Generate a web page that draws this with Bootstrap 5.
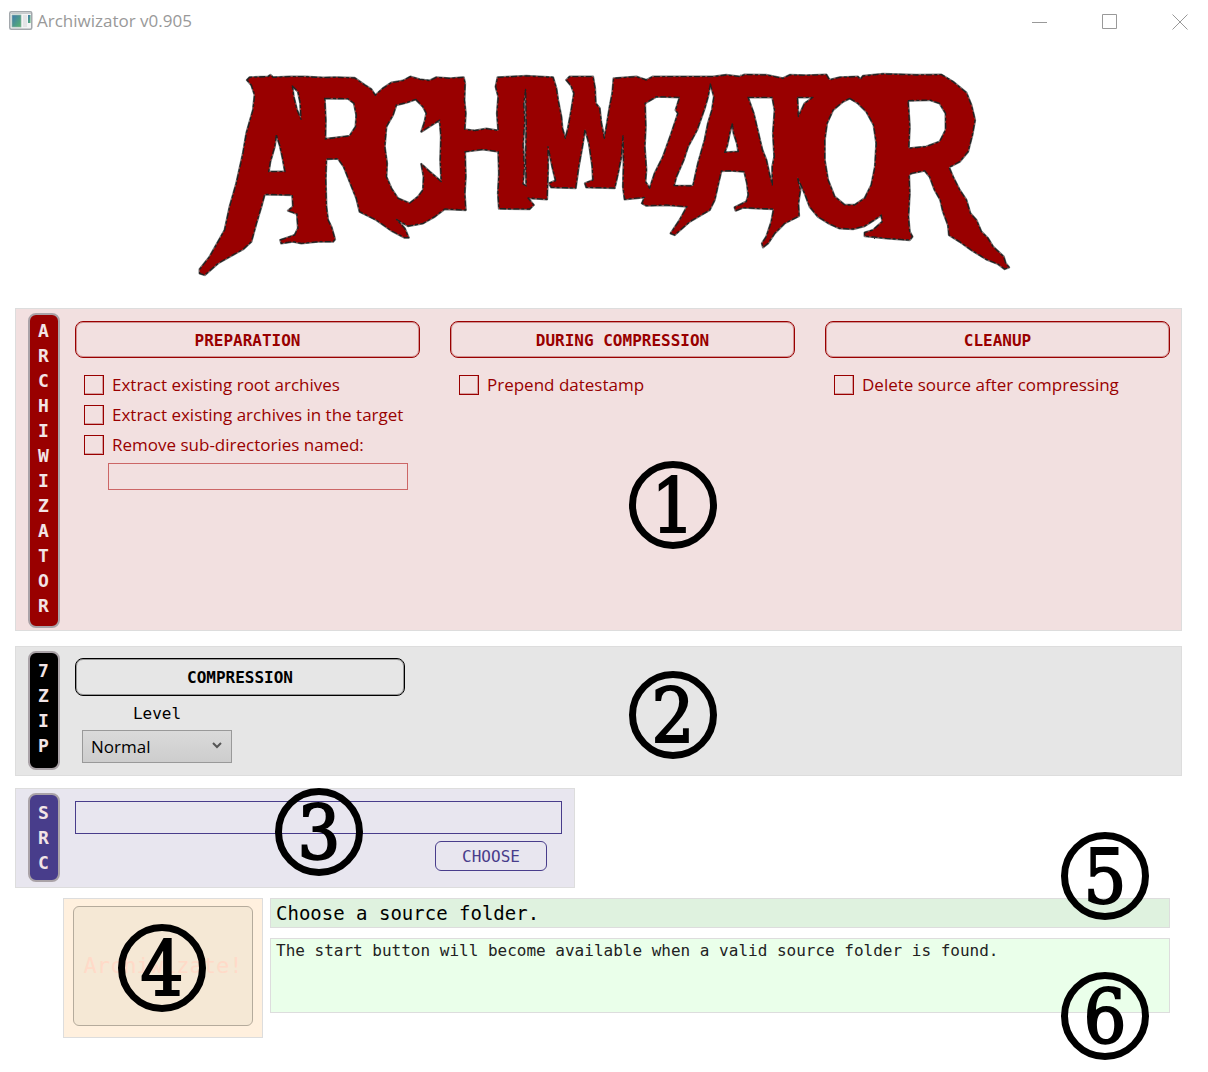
<!DOCTYPE html>
<html lang="en">
<head>
<meta charset="utf-8">
<meta name="viewport" content="width=device-width, initial-scale=1">
<title>Archiwizator v0.905</title>
<link href="https://cdn.jsdelivr.net/npm/bootstrap@5.3.0/dist/css/bootstrap.min.css" rel="stylesheet">
<style>
  :root { --ui: "Open Sans", "Noto Sans", sans-serif; --mono: "DejaVu Sans Mono", monospace; }
  body { font-family: var(--ui); font-size: 17px; line-height: 24px; color: #000; background: #fff; }
  .title-bar { height: 42px; padding-left: 9px; color: #999; }
  .title-bar button { width: 70px; height: 40px; border: 0; background: none; padding: 0 0 0 14px; }
  .logo-wrap { padding: 18px 0 23px; }
  .logo-wrap svg { width: 830px; max-width: 100%; height: auto; display: block; }
  main { padding: 0 26px 32px 15px; }
  .panel { --tone: #900; position: relative; border: 1px solid #ddd; color: var(--tone); }
  .section { display: flex; gap: 15px; padding: 4px 11px 2px 12px; }
  .panel-wiz { background: #f2e0e0; min-height: 323px; margin-bottom: 15px; }
  .panel-zip { --tone: #000; background: #e6e6e6; min-height: 130px; margin-bottom: 12px; }
  .panel-src { --tone: #483d8b; background: #e8e6ef; width: 560px; max-width: 100%; min-height: 100px; margin-bottom: 10px; padding-right: 12px; }
  .tab-label { width: 32px; flex: none; align-self: stretch; margin: 0; padding: 3px 8px 0; border: 2px solid #aaa3a8; border-radius: 8px;
    background: var(--tone); color: #f2e4e6; font: bold 18px/25px var(--mono); word-break: break-all; text-align: center; }
  .panel-zip .tab-label, .panel-src .tab-label { padding-top: 5px; margin-bottom: 3px; }
  .tab-label span { display: block; width: 11px; }
  .group-title { height: 37px; margin: 8px 0 12px; border: 1px solid var(--tone); outline: 1px solid rgba(153, 0, 0, .35); outline-offset: -2px; border-radius: 8px; font: bold 16px/37px var(--mono); text-align: center; }
  .panel-zip .group-title { height: 38px; margin: 7px 0 6px; width: 330px; max-width: 100%; outline-color: rgba(0, 0, 0, .35); line-height: 38px; }
  .opt { display: flex; align-items: center; gap: 8px; height: 30px; padding-left: 9px; }
  .opt input { appearance: none; width: 20px; height: 20px; margin: 0; border: 1px solid var(--tone); box-shadow: inset -1px -1px rgba(153, 0, 0, .3); background: none; }
  .opt input:checked { background: var(--tone); }
  .text-line { display: block; border: 1px solid var(--tone); background: transparent; border-radius: 0; color: var(--tone); padding: 0 6px; }
  .names-line { width: 300px; max-width: 90%; height: 27px; margin: 3px 0 0 33px; border-color: #c66; }
  .src-line { width: 100%; height: 33px; margin-top: 8px; }
  .columns { column-gap: 30px; }
  .level { width: 150px; margin-left: 7px; }
  .level label { font: 16px/24px var(--mono); display: block; text-align: center; margin-bottom: 4px; }
  .level select { height: 33px; border: 1px solid #999; border-radius: 0; padding: 0 24px 0 8px; font-size: 17px; line-height: 24px; color: #000;
    background: url("data:image/svg+xml,%3Csvg xmlns='http://www.w3.org/2000/svg' viewBox='0 0 10 8'%3E%3Cpath d='M1 2l4 4 4-4' fill='none' stroke='%23555' stroke-width='2'/%3E%3C/svg%3E") right 9px top 10px / 10px 8px no-repeat, linear-gradient(#dadada, #cdcdcd); }
  .choose { width: 112px; height: 30px; margin: 7px 15px 0 0; padding: 0; border: 1px solid var(--tone); border-radius: 6px; background: none; color: var(--tone); font: 16px/29px var(--mono); }
  .bottom { padding-left: 48px; padding-right: 12px; gap: 7px; }
  .start-box { width: 200px; height: 140px; padding: 7px 9px 11px; background: #fff0de; }
  .start { width: 100%; height: 100%; border: 1px solid #b5ab9c; border-radius: 6px; background: #f5e8d5; color: #ffdac8; font: 22px/26px var(--mono); padding: 0; }
  .status { height: 30px; margin-bottom: 10px; padding-left: 5px; background: #dff2df; color: #000; font: 19px/28px var(--mono); }
  .details { height: 75px; padding-left: 5px; background: #eaffea; color: #222; font: 16px/24px var(--mono); }
  .callout { position: absolute; width: 88px; height: 88px; border: 7px solid #000; border-radius: 50%; color: #000;
    font: 75px/76px "DejaVu Serif Condensed", "DejaVu Serif", serif; -webkit-text-stroke: 2px #000; text-align: center; z-index: 2; pointer-events: none; }
  .c1 { left: 613px; top: 152px; }
  .c2 { left: 613px; top: 24px; }
  .c3 { left: 259px; top: -1px; }
  .c4 { left: 54px; top: 25px; }
  .c5 { right: 20px; top: -67px; }
  .c6 { right: 20px; top: 33px; }
</style>
<script src="https://cdn.jsdelivr.net/npm/bootstrap@5.3.0/dist/js/bootstrap.bundle.min.js"></script>
</head>
<body>
<header class="title-bar d-flex align-items-center">
  <svg width="24" height="20" viewBox="0 0 24 20" aria-hidden="true">
    <defs><linearGradient id="scr" x1="0" y1="0" x2="1" y2="1"><stop offset="0" stop-color="#3f78b0"/><stop offset="1" stop-color="#58b56c"/></linearGradient></defs>
    <rect x=".75" y=".75" width="22" height="17.5" rx="1.5" fill="#f3f4f5" stroke="#a3a8ac" stroke-width="1.5"/>
    <path d="M2 2.5h20" stroke="#c8cbce"/>
    <rect x="3" y="4" width="9" height="12" fill="url(#scr)" stroke="#8fb3a5" stroke-width=".7"/>
    <rect x="14" y="4" width="4" height="12" fill="#e3e4e6"/><rect x="19" y="4" width="2.5" height="8" fill="url(#scr)"/>
  </svg>
  <span class="ms-1">Archiwizator v0.905</span>
  <div class="ms-auto d-flex">
    <button type="button" aria-label="Minimize"><svg width="16" height="16" viewBox="0 0 16 16"><path d="M0 8.5h15" stroke="#999"/></svg></button>
    <button type="button" aria-label="Maximize"><svg width="16" height="16" viewBox="0 0 16 16"><path d="M.5.5h14v14H.5z" fill="none" stroke="#999"/></svg></button>
    <button type="button" aria-label="Close"><svg width="16" height="16" viewBox="0 0 16 16"><path d="M.5.5l15 15M15.500.5l-15 15" stroke="#999"/></svg></button>
  </div>
</header>

<div class="logo-wrap d-flex justify-content-center">
  <svg viewBox="-2 0 2490 675" role="img" aria-label="Archiwizator">
    <defs>
      <filter id="rough" x="-2%" y="-2%" width="104%" height="104%"><feTurbulence type="fractalNoise" baseFrequency=".12" numOctaves="2" seed="4"/><feDisplacementMap in="SourceGraphic" scale="4" xChannelSelector="R" yChannelSelector="G"/></filter>
      <path id="mark-shape" fill-rule="evenodd" d="M172 60L180 52 235 50 242 45 250 52 300 50 345 50 400 53 440 52 495 54 525 75 545 88 557 106 580 85 605 68 640 62 662 50 690 58 720 62 740 52 780 55 822 52 826 70 824 120 828 160 825 208 855 212 890 206 926 212 922 160 926 110 918 80 924 52 1010 48 1090 52 1100 85 1105 120 1115 170 1118 205 1127 235 1135 205 1145 150 1153 100 1145 78 1130 60 1140 50 1210 50 1216 85 1218 130 1230 145 1235 190 1244 235 1252 190 1260 140 1268 100 1272 55 1340 50 1370 60 1390 50 1510 50 1570 50 1610 45 1650 50 1665 44 1730 45 1780 55 1800 45 1850 46 1910 44 1920 60 1950 52 2005 50 2012 58 2020 48 2080 42 2180 45 2255 44 2290 65 2330 98 2345 135 2356 180 2348 225 2335 275 2310 305 2278 322 2290 350 2310 390 2330 420 2342 460 2360 480 2375 515 2395 535 2410 560 2442 590 2448 610 2458 622 2445 627 2425 612 2390 598 2345 570 2310 545 2278 525 2275 495 2260 455 2252 420 2235 390 2220 350 2205 332 2165 340 2158 345 2160 400 2156 470 2160 515 2168 530 2160 540 2090 535 2025 528 2025 518 2050 510 2078 485 2075 465 2050 482 2025 498 1990 507 1950 505 1920 492 1885 470 1860 440 1845 400 1823 352 1832 390 1826 430 1828 468 1785 490 1755 520 1735 550 1720 562 1717 550 1730 530 1745 485 1752 447 1700 445 1660 443 1638 452 1635 442 1670 425 1676 405 1672 370 1664 335 1620 332 1595 333 1585 375 1575 420 1560 450 1500 485 1455 525 1443 520 1470 480 1492 440 1430 435 1370 437 1357 430 1365 412 1305 418 1300 380 1302 310 1300 225 1295 290 1285 340 1275 384 1190 382 1186 370 1210 360 1208 320 1198 250 1186 208 1178 260 1167 320 1158 384 1085 382 1078 370 1098 362 1090 330 1075 260 1075 330 1072 418 1015 414 1032 435 1020 447 928 446 925 400 928 340 926 275 880 268 826 275 828 350 825 400 828 450 765 447 735 470 700 490 655 498 620 478 645 505 657 533 645 533 605 512 560 480 510 455 500 415 480 365 462 320 445 296 410 297 408 360 410 440 415 480 425 500 436 538 430 545 385 545 335 550 310 545 275 550 272 540 315 525 325 505 322 462 295 452 310 440 308 405 225 403 215 440 200 490 185 545 160 568 120 590 85 610 45 645 30 640 30 628 60 590 105 510 120 440 140 370 160 280 170 220 190 150 195 105 185 75Z
      M260 225L255 260 242 305 237 335 286 335 278 290 270 255Z
      M308 78L325 95 332 130 334 178 322 150 312 110Z
      M405 115L475 116 493 130 500 165 498 200 480 228 440 233 407 237 408 180Z
      M678 118L700 140 710 160 705 185 695 215 750 180 754 230 752 300 755 365 720 335 695 312 702 350 700 390 685 410 660 430 625 415 605 385 590 350 592 310 585 260 590 200 610 165 620 135 650 128Z
      M1008 88L1002 130 1005 180 1000 255 1004 320 1000 372 1010 378 1008 300 1010 200Z
      M1470 112L1400 110 1366 130 1368 200 1365 260 1370 330 1367 365 1380 385 1395 340 1420 290 1445 220 1465 160 1458 150Z
      M1562 72L1555 110 1545 145 1522 210 1495 260 1482 300 1460 350 1453 377 1510 378 1525 310 1545 240 1555 190 1567 150 1573 110Z
      M1628 190L1620 220 1613 255 1605 277 1646 275 1642 250 1632 220Z
      M1675 112L1748 112 1755 150 1750 220 1754 290 1748 320 1748 375 1740 345 1730 300 1718 270 1705 215 1692 160Z
      M1823 112L1870 112 1845 130 1826 170Z
      M1980 115L2005 130 2030 155 2052 195 2060 250 2056 320 2045 375 2025 415 1995 435 1965 435 1935 410 1915 360 1905 300 1905 240 1912 190 1930 150 1960 125Z
      M2155 122L2220 120 2250 130 2268 160 2268 210 2250 245 2210 260 2157 265 2160 200Z"/>
    </defs>
    <g filter="url(#rough)" stroke-linejoin="round">
      <use href="#mark-shape" fill="#900" stroke="#777" stroke-width="7"/>
      <use href="#mark-shape" fill="#900" stroke="#222" stroke-width="4" stroke-dasharray="18 7 9 6"/>
    </g>
  </svg>
</div>

<main>
  <section class="panel section panel-wiz">
    <h2 class="tab-label"><span>ARCHIWIZATOR</span></h2>
    <div class="columns d-flex flex-grow-1">
      <div class="col">
        <h3 class="group-title">PREPARATION</h3>
        <div class="opt"><input type="checkbox" id="o1"><label for="o1">Extract existing root archives</label></div>
        <div class="opt"><input type="checkbox" id="o2"><label for="o2">Extract existing archives in the target</label></div>
        <div class="opt"><input type="checkbox" id="o3"><label for="o3">Remove sub-directories named:</label></div>
        <input class="text-line names-line" type="text" aria-label="Sub-directory names">
      </div>
      <div class="col">
        <h3 class="group-title">DURING COMPRESSION</h3>
        <div class="opt"><input type="checkbox" id="o4"><label for="o4">Prepend datestamp</label></div>
      </div>
      <div class="col">
        <h3 class="group-title">CLEANUP</h3>
        <div class="opt"><input type="checkbox" id="o5"><label for="o5">Delete source after compressing</label></div>
      </div>
    </div>
    <div class="callout c1">1</div>
  </section>

  <section class="panel section panel-zip">
    <h2 class="tab-label"><span>7ZIP</span></h2>
    <div class="flex-grow-1">
      <h3 class="group-title">COMPRESSION</h3>
      <div class="level">
        <label for="level">Level</label>
        <select class="form-select" id="level"><option>Normal</option></select>
      </div>
    </div>
    <div class="callout c2">2</div>
  </section>

  <section class="panel section panel-src">
    <h2 class="tab-label"><span>SRC</span></h2>
    <div class="flex-grow-1">
      <input class="text-line src-line" type="text" aria-label="Source folder">
      <div class="d-flex justify-content-end"><button class="choose" type="button">CHOOSE</button></div>
    </div>
    <div class="callout c3">3</div>
  </section>

  <div class="bottom d-flex">
    <div class="panel start-box flex-shrink-0">
      <button class="start" type="button" disabled>Archiwizate!</button>
      <div class="callout c4">4</div>
    </div>
    <div class="flex-grow-1">
      <div class="panel status">Choose a source folder.<div class="callout c5">5</div></div>
      <div class="panel details">The start button will become available when a valid source folder is found.<div class="callout c6">6</div></div>
    </div>
  </div>
</main>
</body>
</html>
